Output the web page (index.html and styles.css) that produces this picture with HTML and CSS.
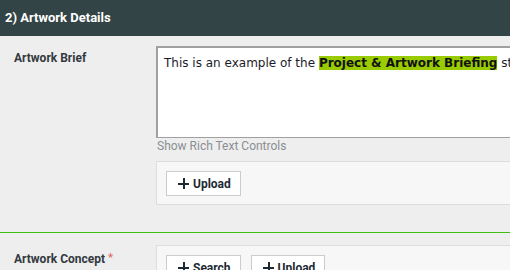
FILE: index.html
```html
<!DOCTYPE html>
<html lang="en">
<head>
    <meta charset="UTF-8">
    <meta name="viewport" content="width=device-width, initial-scale=1.0">
    <title>Artwork Details</title>
    <link rel="stylesheet" href="styles.css">
</head>
<body>
    <div class="page">
        <div class="section-header">2) Artwork Details</div>

        <div class="field-row field-brief">
            <div class="field-label">Artwork Brief</div>
            <div class="field-body">
                <div class="rich-text" contenteditable="true">This is an example of the <span class="mark">Project &amp; Artwork Briefing</span> stage of the workflow.</div>
                <div class="rich-toggle">Show Rich Text Controls</div>
                <div class="attach-box">
                    <button class="btn"><span class="plus"></span>Upload</button>
                </div>
            </div>
        </div>
        <div class="row-divider"></div>

        <div class="field-row field-concept">
            <div class="field-label">Artwork Concept <span class="req">*</span></div>
            <div class="field-body">
                <div class="attach-box">
                    <button class="btn"><span class="plus"></span>Search</button>
                    <button class="btn"><span class="plus"></span>Upload</button>
                </div>
            </div>
        </div>
    </div>
</body>
</html>
```

FILE: styles.css
```css
body {
    margin: 0;
    background: #eeeeee;
    font-family: Roboto, Arial, sans-serif;
    color: #333;
    overflow: hidden;
}
.page {
    width: 660px;
}
.section-header {
    height: 36px;
    box-sizing: border-box;
    padding: 9px 5px 0;
    background: #334446;
    color: #fff;
    font-size: 13px;
    font-weight: bold;
    line-height: 18px;
}
.field-row {
    display: flex;
}
.field-brief {
    padding: 10px 0 27px;
}
.row-divider {
    height: 1px;
    background: #3fbe12;
}
.field-concept {
    padding: 12px 0 0;
}
.field-label {
    width: 142px;
    flex: none;
    padding-left: 14px;
    font-size: 12px;
    font-weight: bold;
    line-height: 14px;
    color: #333a3f;
}
.field-brief .field-label {
    padding-top: 5px;
}
.field-concept .field-label {
    padding-top: 6px;
}
.req {
    color: #e26a6a;
    font-size: 11px;
    vertical-align: 2px;
}
.field-body {
    flex: 1;
}
.rich-text {
    border: 1px solid #a0a0a0;
    border-top-width: 2px;
    border-left-width: 2px;
    background: #fff;
    padding: 8px 6px;
    box-sizing: border-box;
    height: 92px;
    font-family: "DejaVu Sans", Verdana, sans-serif;
    font-size: 12px;
    line-height: 14px;
    color: #1a1a2a;
    white-space: nowrap;
    outline: none;
}
.mark {
    background: #99cc00;
    font-weight: bold;
    color: #111;
}
.rich-toggle {
    padding: 1px 0 0 1px;
    font-size: 12px;
    line-height: 14px;
    color: #8a8f93;
}
.attach-box {
    display: flex;
    gap: 10px;
    margin-top: 8px;
    padding: 9px 9px 8px;
    background: #f7f7f7;
    border: 1px solid #dddddd;
}
.field-concept .attach-box {
    margin-top: 0;
}
.btn {
    display: flex;
    align-items: center;
    gap: 4px;
    height: 25px;
    padding: 0 9px 0 11px;
    background: #fff;
    border: 1px solid #cccccc;
    font-family: Roboto, Arial, sans-serif;
    font-size: 12px;
    font-weight: bold;
    color: #1e2a33;
    cursor: pointer;
}
.plus {
    position: relative;
    width: 11px;
    height: 11px;
}
.plus::before,
.plus::after {
    content: "";
    position: absolute;
    background: #1e2a33;
}
.plus::before {
    left: 0;
    top: 5px;
    width: 11px;
    height: 2px;
}
.plus::after {
    left: 5px;
    top: 0;
    width: 2px;
    height: 11px;
}
```
